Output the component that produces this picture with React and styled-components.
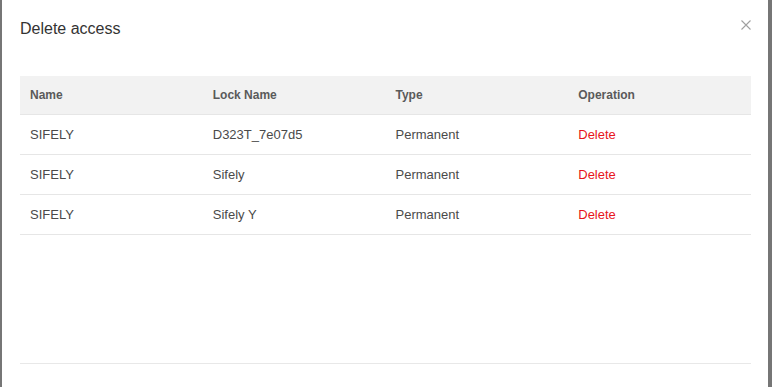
import React from "react";
import styled, { createGlobalStyle } from "styled-components";

const GlobalStyle = createGlobalStyle`
    html, body {
        margin: 0;
        padding: 0;
        background: #7a7a7a;
        font-family: "Liberation Sans", Arial, sans-serif;
    }
`

const Backdrop = styled.div`
    width: 772px;
    height: 387px;
    overflow: hidden;
    background-color: #767676;
    display: flex;
    justify-content: flex-start;
    padding-left: 2px;
    box-sizing: border-box;
`

const Smodal = styled.div`
    width: 766px;
    height: 420px;
    background-color: #ffffff;
    display: flex;
    flex-direction: column;
    box-sizing: border-box;
    padding: 0 17px 0 18px;
`

const Sheader = styled.div`
    display: flex;
    justify-content: space-between;
    align-items: flex-start;
    height: 76px;
`

const Stitle = styled.div`
    font-size: 16px;
    color: #333333;
    margin-top: 20px;
`

const Sclose = styled.div`
    margin-top: 19px;
    margin-right: -1px;
    width: 12px;
    height: 12px;
    cursor: pointer;
    display: flex;
`

const Stable = styled.div`
    display: flex;
    flex-direction: column;
    height: 288px;
    border-bottom: 1px solid #e8e8e8;
    box-sizing: border-box;
`

const Srow = styled.div`
    display: grid;
    grid-template-columns: repeat(4, 1fr);
    height: ${(p) => (p.head ? "39px" : "40px")};
    align-items: center;
    background-color: ${(p) => (p.head ? "#f2f2f2" : "#ffffff")};
    border-bottom: 1px solid #e6e6e6;
    box-sizing: border-box;
`

const Scell = styled.div`
    padding-left: 10px;
    font-size: ${(p) => (p.head ? "12px" : "13px")};
    font-weight: ${(p) => (p.head ? "bold" : "normal")};
    color: ${(p) => (p.red ? "#e8141b" : p.head ? "#5a5a5a" : "#4a4a4a")};
    cursor: ${(p) => (p.red ? "pointer" : "default")};
`

const rows = [
    { name: "SIFELY", lock: "D323T_7e07d5", type: "Permanent" },
    { name: "SIFELY", lock: "Sifely", type: "Permanent" },
    { name: "SIFELY", lock: "Sifely Y", type: "Permanent" },
]

const App = () => {
    return (
        <>
            <GlobalStyle />
            <Backdrop>
                <Smodal>
                    <Sheader>
                        <Stitle>Delete access</Stitle>
                        <Sclose>
                            <svg width="12" height="12" viewBox="0 0 12 12">
                                <path d="M1.5 1.5 L10.5 10.5 M10.5 1.5 L1.5 10.5" stroke="#a0a0a0" strokeWidth="1.1" />
                            </svg>
                        </Sclose>
                    </Sheader>
                    <Stable>
                        <Srow head>
                            <Scell head>Name</Scell>
                            <Scell head>Lock Name</Scell>
                            <Scell head>Type</Scell>
                            <Scell head>Operation</Scell>
                        </Srow>
                        {rows.map((r, i) => (
                            <Srow key={i}>
                                <Scell>{r.name}</Scell>
                                <Scell>{r.lock}</Scell>
                                <Scell>{r.type}</Scell>
                                <Scell red>Delete</Scell>
                            </Srow>
                        ))}
                    </Stable>
                </Smodal>
            </Backdrop>
        </>
    )
}

export default App;
